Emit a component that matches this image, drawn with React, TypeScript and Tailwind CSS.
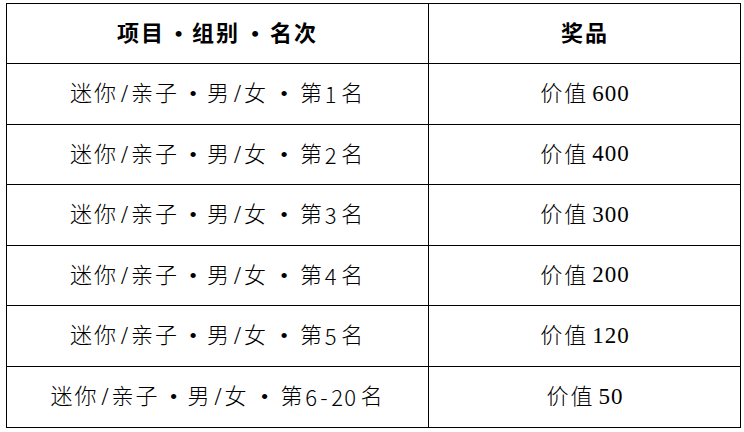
import React from "react";

const FONT = { fontFamily: '"Liberation Serif", "Noto Sans CJK SC", serif' };

function Cjk({ children }: { children: React.ReactNode }) {
  return <span className="tracking-[2px]">{children}</span>;
}
function Box({ w, children }: { w: string; children: React.ReactNode }) {
  return <span className={`inline-block text-center ${w}`}>{children}</span>;
}
function Slash() {
  return <span className="inline-block w-[13px] text-center text-[25px] font-normal">/</span>;
}
function Chars({ s }: { s: string }) {
  return (
    <>
      {s.split("").map((c, i) => (
        <span key={i} className="inline-block w-[13px] text-center font-['Noto_Sans_CJK_SC'] font-light">
          {c}
        </span>
      ))}
    </>
  );
}

const rows: [string, string][] = [
  ["1", "600"],
  ["2", "400"],
  ["3", "300"],
  ["4", "200"],
  ["5", "120"],
  ["6-20", "50"],
];

export default function App() {
  return (
    <div className="w-[744px] h-[432px] bg-white text-black" style={FONT}>
      <div className="pt-[3px] pl-[6px]">
        <div className="w-[735px] border border-black grid grid-cols-[422px_312px]">
          <div className="h-[60px] border-r border-b border-black flex items-center justify-center text-[22px] font-bold whitespace-nowrap">
            <Cjk>项目</Cjk>
            <Box w="w-[27px]">•</Box>
            <Cjk>组别</Cjk>
            <Box w="w-[30px]">•</Box>
            <Cjk>名次</Cjk>
          </div>
          <div className="h-[60px] border-b border-black flex items-center justify-center text-[22px] font-bold whitespace-nowrap">
            <Cjk>奖品</Cjk>
          </div>
          {rows.map(([n, v], i) => {
            const last = i === rows.length - 1;
            return (
              <React.Fragment key={i}>
                <div
                  className={`h-[60.5px] border-r border-black flex items-center justify-center text-[22px] font-light whitespace-nowrap ${
                    last ? "" : "border-b"
                  }`}
                >
                  <Cjk>迷你</Cjk>
                  <Slash />
                  <Cjk>亲子</Cjk>
                  <Box w="w-[28px]">•</Box>
                  <Cjk>男</Cjk>
                  <Slash />
                  <Cjk>女</Cjk>
                  <Box w="w-[32px]">•</Box>
                  <Cjk>第</Cjk>
                  <Chars s={n} />
                  <span className="inline-block w-[4px]"> </span>
                  <Cjk>名</Cjk>
                </div>
                <div
                  className={`h-[60.5px] border-black flex items-center justify-center text-[22px] font-light whitespace-nowrap ${
                    last ? "" : "border-b"
                  }`}
                >
                  <Cjk>价值</Cjk>
                  <span className="inline-block w-[4px]"> </span>
                  <span className="tracking-[1px] text-[23px]">{v}</span>
                </div>
              </React.Fragment>
            );
          })}
        </div>
      </div>
    </div>
  );
}
